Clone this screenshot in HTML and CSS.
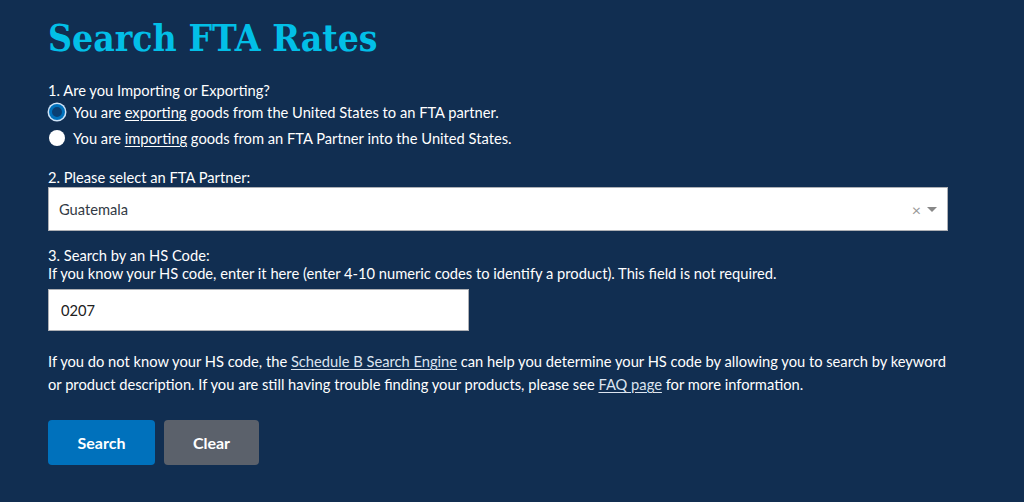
FILE: index.html
```html
<!DOCTYPE html>
<html lang="en">
<head>
  <meta charset="UTF-8" />
  <title>Search FTA Rates</title>
  <link rel="stylesheet" href="styles.css">
</head>
<body>

  <section class="fta-search">
    <h1>Search FTA Rates</h1>

    <form id="ftaForm">
      <fieldset class="group-radios">
        <legend>1. Are you Importing or Exporting?</legend>
        <label class="radio">
          <input type="radio" name="direction" value="export" checked>
          <span class="dot focused"></span>
          <span>You are <u>exporting</u> goods from the United States to an FTA partner.</span>
        </label>
        <label class="radio">
          <input type="radio" name="direction" value="import">
          <span class="dot"></span>
          <span>You are <u>importing</u> goods from an FTA Partner into the United States.</span>
        </label>
      </fieldset>

      <div class="group-partner">
        <label class="field-label" for="partner">2. Please select an FTA Partner:</label>
        <div class="select" id="partner">
          <span class="select-value">Guatemala</span>
          <span class="select-clear">&times;</span>
          <span class="select-arrow"></span>
        </div>
      </div>

      <div class="group-hs">
        <label class="field-label" for="hsCode">3. Search by an HS Code:<br>
          If you know your HS code, enter it here (enter 4-10 numeric codes to identify a product). This field is not required.</label>
        <input type="text" id="hsCode" class="hs-input" value="0207">
      </div>

      <p class="help">
        If you do not know your HS code, the <a href="#">Schedule B Search Engine</a> can help you determine your HS code by allowing you to search by keyword
        or product description. If you are still having trouble finding your products, please see <a href="#">FAQ page</a> for more information.
      </p>

      <div class="actions">
        <button type="submit" class="btn btn-primary">Search</button>
        <button type="reset" class="btn btn-gray">Clear</button>
      </div>
    </form>
  </section>

</body>
</html>
```

FILE: styles.css
```css
body {
  margin: 0;
  background: #ffffff;
  font-family: Lato, "Open Sans", sans-serif;
  font-size: 14.7px;
  color: #ffffff;
}

.fta-search {
  background-color: #112e51;
  height: 502px;
  padding: 0 48px;
  box-sizing: border-box;
  overflow: hidden;
}

h1 {
  margin: 0;
  padding-top: 14px;
  font-family: "DejaVu Serif Condensed", "DejaVu Serif", serif;
  font-weight: bold;
  font-size: 37px;
  line-height: 48px;
  color: #02bfe7;
}

fieldset {
  border: none;
  margin: 0;
  padding: 0;
}

.group-radios {
  margin-top: 19px;
}

legend {
  padding: 0;
  line-height: 18px;
}

.radio {
  display: flex;
  align-items: center;
  height: 26px;
}

.radio input {
  display: none;
}

.dot {
  width: 16px;
  height: 16px;
  border-radius: 50%;
  background: #ffffff;
  margin-left: 1px;
  margin-right: 8px;
  box-sizing: border-box;
  flex-shrink: 0;
}

.dot.focused {
  background: #0b3f73;
  border: 3px solid #0071bc;
  box-shadow: 0 0 0 1.5px #cfe3f7;
}

.radio u {
  text-underline-offset: 2px;
}

.group-partner {
  margin-top: 17px;
}

.group-hs {
  margin-top: 15px;
}

.field-label {
  display: block;
  line-height: 18px;
  margin-bottom: 1px;
}

.select {
  display: flex;
  align-items: center;
  height: 44px;
  background: #ffffff;
  border: 1px solid #aeb0b5;
  box-sizing: border-box;
  width: 900px;
  padding: 0 10px;
  color: #323a45;
}

.select-value {
  flex: 1;
}

.select-clear {
  color: #999999;
  font-size: 16px;
  margin-right: 6px;
}

.select-arrow {
  width: 0;
  height: 0;
  border-left: 5px solid transparent;
  border-right: 5px solid transparent;
  border-top: 5px solid #888888;
}

.hs-input {
  display: block;
  width: 421px;
  height: 42px;
  box-sizing: border-box;
  border: 1px solid #aeb0b5;
  padding: 0 12px;
  font-family: inherit;
  font-size: 14.7px;
  color: #212121;
  margin-top: 7px;
}

.help {
  margin: 19px 0 0;
  max-width: 905px;
  line-height: 23px;
}

.help a {
  color: #dce4ef;
  text-underline-offset: 2px;
}

.actions {
  display: flex;
  gap: 9px;
  margin-top: 24px;
}

.btn {
  height: 45px;
  border: none;
  border-radius: 4px;
  color: #ffffff;
  font-family: inherit;
  font-weight: bold;
  font-size: 16px;
  cursor: pointer;
}

.btn-primary {
  background-color: #0071bc;
  width: 107px;
}

.btn-gray {
  background-color: #5b616b;
  width: 95px;
}
```
